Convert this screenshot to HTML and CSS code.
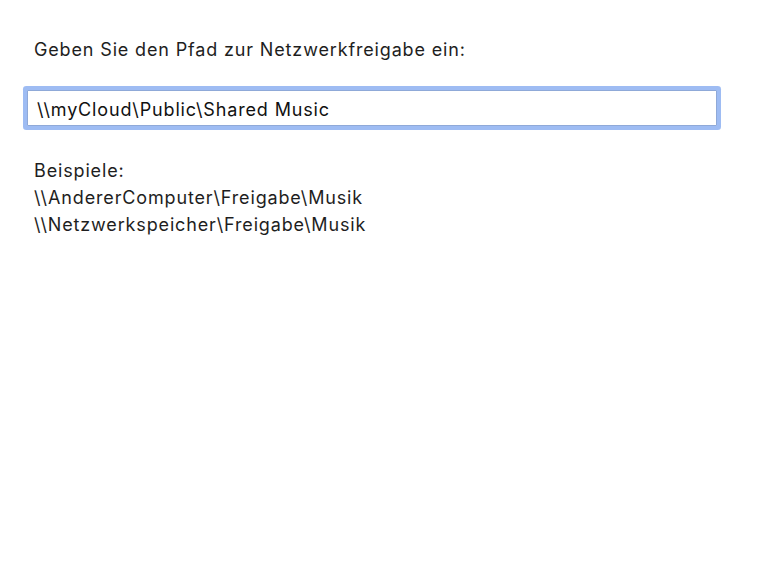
FILE: index.html
```html
<!DOCTYPE html>
<html lang="de">

<head>
    <meta charset="UTF-8">
    <title>Netzwerkfreigabe</title>
    <link rel="stylesheet" href="styles.css">
</head>

<body>
    <div class="panel">
        <!-- Prompt -->
        <label class="prompt" for="sharePath">Geben Sie den Pfad zur Netzwerkfreigabe ein:</label>

        <!-- Path input -->
        <input class="path-input" id="sharePath" type="text" value="\\myCloud\Public\Shared Music">

        <!-- Examples -->
        <div class="examples">
            <div>Beispiele:</div>
            <div>\\AndererComputer\Freigabe\Musik</div>
            <div>\\Netzwerkspeicher\Freigabe\Musik</div>
        </div>
    </div>
</body>

</html>
```

FILE: styles.css
```css
/* General styles */
body {
    margin: 0;
    font-family: Inter, "Liberation Sans", Arial, sans-serif;
    letter-spacing: 0.85px;
    background-color: #fff;
    color: #1e1e1e;
}

.panel {
    display: flex;
    flex-direction: column;
    align-items: flex-start;
    padding: 38px 0 0 34px;
}

.prompt {
    font-size: 18px;
    line-height: 24px;
}

/* Path input with focus ring */
.path-input {
    box-sizing: border-box;
    width: 690px;
    height: 36px;
    margin: 28px 0 0 -7px;
    padding: 3px 9px 0;
    font-family: inherit;
    font-size: 18px;
    letter-spacing: inherit;
    color: #111;
    background: #fff;
    border: 1px solid #8fa9d8;
    border-radius: 1px;
    box-shadow: 0 0 0 4px #9ebcf3;
    outline: none;
}

.examples {
    margin-top: 31px;
    font-size: 18px;
    line-height: 27px;
}
```
